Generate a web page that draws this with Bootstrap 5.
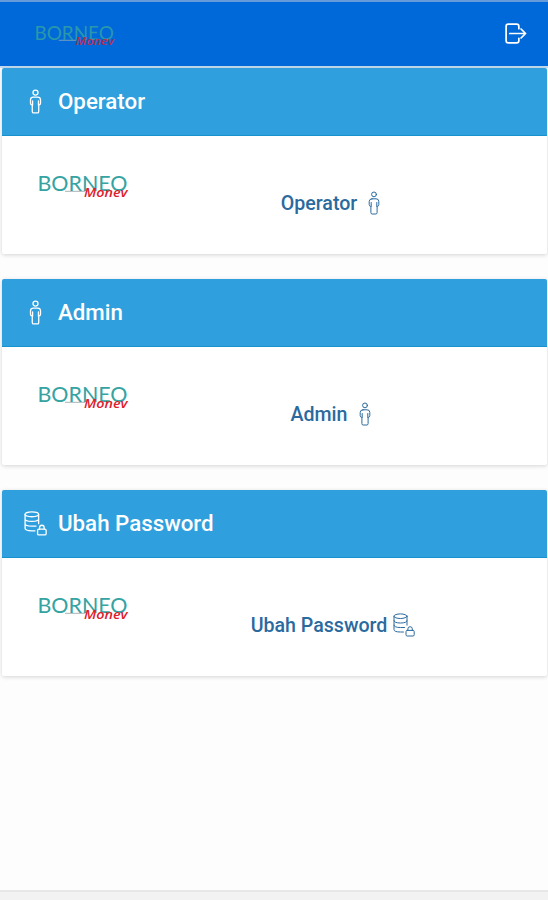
<!DOCTYPE html>
<html lang="id">
<head>
<meta charset="utf-8">
<meta name="viewport" content="width=device-width, initial-scale=1">
<title>Borneo Monev</title>
<link href="https://cdn.jsdelivr.net/npm/bootstrap@5.3.0/dist/css/bootstrap.min.css" rel="stylesheet">
<style>
body{font-family:Roboto,"Liberation Sans",sans-serif;background:#fdfdfd;overflow:hidden}
.topbar{height:68px;background:#0069d9;border-top:2px solid #649bd8;border-bottom:2px solid #c3dcf0;padding:0 21px 0 35px}
.brand-logo{margin-top:4px}
.exit-link{margin-top:-2px}
.exit-link .ic{stroke-width:1.8}
.menu-list{padding:0 1px 0 2px;gap:25px}
.menu-card{--bs-card-border-width:0;--bs-card-border-radius:2px;--bs-card-inner-border-radius:2px;height:186px;box-shadow:0 1px 4px rgba(0,0,0,.17)}
.menu-head{height:68px;background:#309fdd;border-bottom:1px solid #1792cf;padding:0 0 0 21px;gap:10px;font-size:22.3px;font-weight:500;color:#fff;line-height:1}
.menu-head .ic{margin-top:-1px}
.menu-head span{padding-bottom:1px}
.menu-body{padding:0 18px 0 36px}
.menu-logo{width:92px;padding-top:37px}
.menu-link{color:#2a6a9e;font-size:19.6px;font-weight:500;line-height:24px;gap:5px;padding-left:8px;padding-top:54px;height:80px}
.menu-link span{padding-top:2px}
.ic{fill:none;stroke:currentColor;stroke-width:1.25;stroke-linecap:round;stroke-linejoin:round;flex:none}
.menu-link .ic{stroke-width:1}
.foot{height:10px;background:#f2f2f2;border-top:2px solid #e7e7e7}
</style>
<script src="https://cdn.jsdelivr.net/npm/bootstrap@5.3.0/dist/js/bootstrap.bundle.min.js"></script>
</head>
<body class="vh-100 d-flex flex-column">
<svg class="d-none">
  <symbol id="person" viewBox="0 0 24 24">
    <circle cx="12" cy="3.4" r="2.4"/>
    <path d="M10 7.800h4q2.800 0 2.800 2.600v3.200q0 1.500-1.700 1.900v6q0 1.500-1.200 1.500h-3.800q-1.200 0-1.200-1.500v-6q-1.700-.4-1.700-1.900v-3.200Q7.200 7.800 10 7.800zM9.200 11.500v4M14.800 11.500v4"/>
  </symbol>
  <symbol id="datalock" viewBox="0 0 24 24">
    <ellipse cx="8.500" cy="3.200" rx="6.500" ry="2.300"/>
    <path d="M2 3.200v13.400q0 2.400 6.500 2.400h3M15 3.200v9M2 7.700q0 2.300 6.500 2.300t6.500-2.300M2 12.200q0 2.300 6.500 2.300h4M15.900 17.400v-1.500a2.200 2.200 0 0 1 4.400 0v1.500"/>
    <rect x="14" y="17.400" width="8.200" height="5.600" rx="1.200"/>
  </symbol>
  <symbol id="logo" viewBox="0 0 92 28">
    <path d="M27 18.300H47" stroke="#a9b3b5" stroke-width="1"/>
    <text x="-.5" y="17.500" textLength="90" lengthAdjust="spacingAndGlyphs" font-family="Lato" font-size="22" font-weight="400" fill="#35a3a2">BORNEO</text>
    <text x="46" y="24" textLength="43.500" lengthAdjust="spacingAndGlyphs" font-family="Open Sans" font-size="13" font-style="italic" font-weight="600" fill="#e0202c">Monev</text>
  </symbol>
</svg>
<nav class="topbar d-flex align-items-center justify-content-between flex-shrink-0">
  <svg class="brand-logo" width="81" height="25" opacity=".8"><use href="#logo"/></svg>
  <a href="#" class="exit-link text-white d-flex" aria-label="Keluar">
    <svg class="ic" width="23" height="23" viewBox="0 0 24 24"><path d="M15.500 7V4.500q0-2.300-2.300-2.300H4.500Q2.200 2.200 2.200 4.500v15q0 2.300 2.300 2.300h8.700q2.300 0 2.300-2.300V17M6 12h16.200M17.800 7.300l4.700 4.700-4.700 4.700"/></svg>
  </a>
</nav>
<main class="menu-list d-flex flex-column flex-grow-1">
  <section class="card menu-card">
    <div class="menu-head card-header d-flex align-items-center"><svg class="ic" width="25" height="25"><use href="#person"/></svg><span>Operator</span></div>
    <div class="menu-body d-flex align-items-start">
      <div class="menu-logo"><svg class="d-block" width="92" height="28"><use href="#logo"/></svg></div>
      <a href="#" class="menu-link flex-grow-1 d-flex align-items-center justify-content-center text-decoration-none"><span>Operator</span><svg class="ic" width="24" height="24"><use href="#person"/></svg></a>
    </div>
  </section>
  <section class="card menu-card">
    <div class="menu-head card-header d-flex align-items-center"><svg class="ic" width="25" height="25"><use href="#person"/></svg><span>Admin</span></div>
    <div class="menu-body d-flex align-items-start">
      <div class="menu-logo"><svg class="d-block" width="92" height="28"><use href="#logo"/></svg></div>
      <a href="#" class="menu-link flex-grow-1 d-flex align-items-center justify-content-center text-decoration-none"><span>Admin</span><svg class="ic" width="24" height="24"><use href="#person"/></svg></a>
    </div>
  </section>
  <section class="card menu-card">
    <div class="menu-head card-header d-flex align-items-center"><svg class="ic" width="25" height="25"><use href="#datalock"/></svg><span>Ubah Password</span></div>
    <div class="menu-body d-flex align-items-start">
      <div class="menu-logo"><svg class="d-block" width="92" height="28"><use href="#logo"/></svg></div>
      <a href="#" class="menu-link flex-grow-1 d-flex align-items-center justify-content-center text-decoration-none"><span>Ubah Password</span><svg class="ic" width="24" height="24"><use href="#datalock"/></svg></a>
    </div>
  </section>
</main>
<footer class="foot flex-shrink-0"></footer>
</body>
</html>
